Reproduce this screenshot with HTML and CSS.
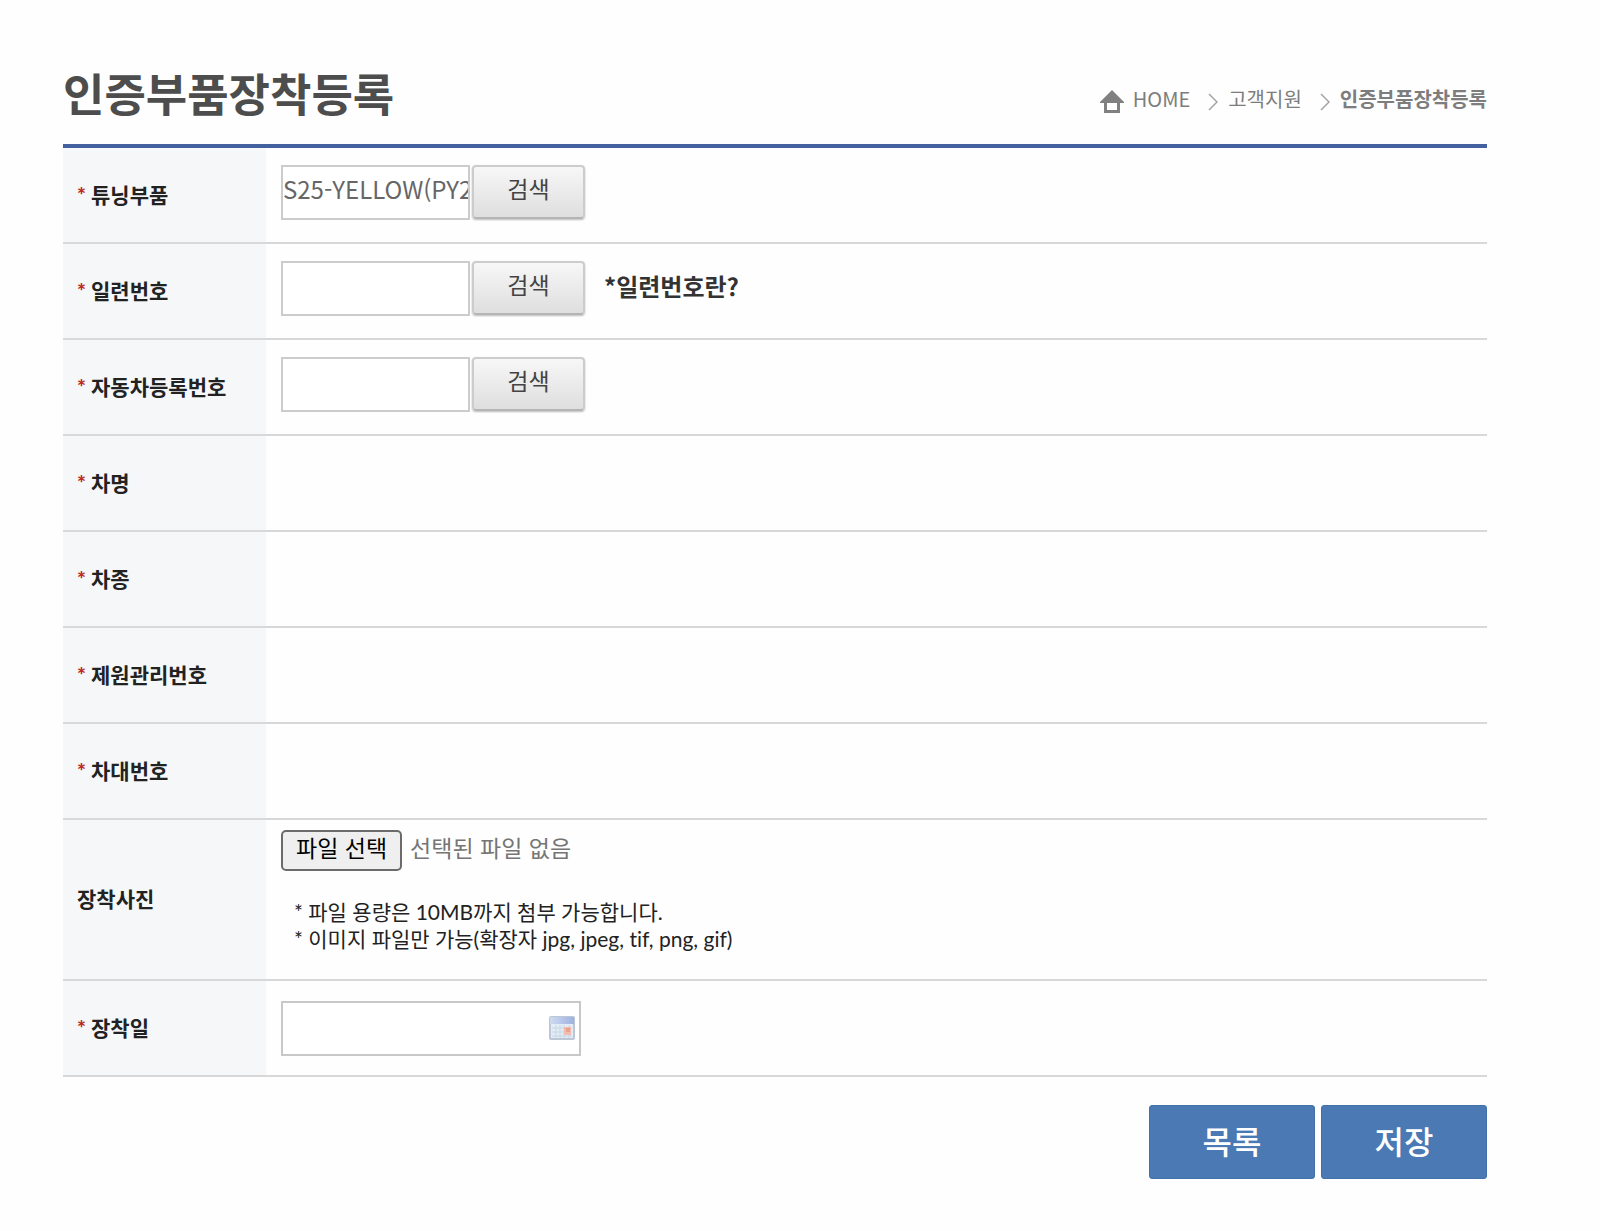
FILE: index.html
```html
<!DOCTYPE html>
<html lang="ko">
<head>
<meta charset="utf-8">
<meta name="viewport" content="width=device-width, initial-scale=1">
<title>인증부품장착등록</title>
<link rel="stylesheet" href="styles.css">
</head>
<body>
<main class="page">
  <header class="page-header">
    <h1 class="title">인증부품장착등록</h1>
    <nav class="breadcrumb" aria-label="현재 위치">
      <a class="home" href="#">
        <svg class="home-icon" width="24" height="24" viewBox="0 0 24 24" aria-hidden="true"><path fill="#808080" fill-rule="evenodd" d="M12 0 24 12V13H20V23H4V13H0V12ZM7 13V20H17V13Z"/></svg>
        HOME</a>
      <svg class="chevron" width="10" height="18" viewBox="0 0 10 18" aria-hidden="true"><path fill="none" stroke="#a3a3a3" stroke-width="1.5" d="M1 1 9 9 1 17"/></svg>
      <a href="#">고객지원</a>
      <svg class="chevron" width="10" height="18" viewBox="0 0 10 18" aria-hidden="true"><path fill="none" stroke="#a3a3a3" stroke-width="1.5" d="M1 1 9 9 1 17"/></svg>
      <strong>인증부품장착등록</strong>
    </nav>
  </header>
  <form>
    <table class="form-table">
      <tbody>
        <tr>
          <th scope="row"><span class="required">*</span> <label for="part">튜닝부품</label></th>
          <td><div class="field"><input class="text-input" id="part" type="text" value="S25-YELLOW(PY2"><button class="search" type="button">검색</button></div></td>
        </tr>
        <tr>
          <th scope="row"><span class="required">*</span> <label for="serial">일련번호</label></th>
          <td><div class="field"><input class="text-input" id="serial" type="text"><button class="search" type="button">검색</button><a class="help" href="#">*일련번호란?</a></div></td>
        </tr>
        <tr>
          <th scope="row"><span class="required">*</span> <label for="plate">자동차등록번호</label></th>
          <td><div class="field"><input class="text-input" id="plate" type="text"><button class="search" type="button">검색</button></div></td>
        </tr>
        <tr><th scope="row"><span class="required">*</span> 차명</th><td></td></tr>
        <tr><th scope="row"><span class="required">*</span> 차종</th><td></td></tr>
        <tr><th scope="row"><span class="required">*</span> 제원관리번호</th><td></td></tr>
        <tr><th scope="row"><span class="required">*</span> 차대번호</th><td></td></tr>
        <tr>
          <th scope="row">장착사진</th>
          <td class="photo">
            <div class="file">
              <input class="file-input" id="photo" type="file" accept="image/*">
              <label class="file-button" for="photo">파일 선택</label>
              <span class="file-name">선택된 파일 없음</span>
            </div>
            <p class="notes">* 파일 용량은 10MB까지 첨부 가능합니다.<br>* 이미지 파일만 가능(확장자 jpg, jpeg, tif, png, gif)</p>
          </td>
        </tr>
        <tr>
          <th scope="row"><span class="required">*</span> <label for="date">장착일</label></th>
          <td class="date-cell">
            <div class="date-box">
              <input class="date-input" id="date" type="text">
              <button class="calendar" type="button" aria-label="날짜 선택">
                <svg width="26" height="24" viewBox="0 0 26 24" aria-hidden="true">
                  <defs><linearGradient id="bar" x2="1"><stop stop-color="#cfdaf0"/><stop offset="1" stop-color="#9db3e0"/></linearGradient></defs>
                  <rect x="1" y="1" width="24" height="22" rx="1" fill="#e4edf5" stroke="#bcc6d6" stroke-width="2"/>
                  <rect x="1" y="1" width="24" height="7" fill="url(#bar)"/>
                  <path d="M3 12H23M3 16H23M3 20H23M7 9V22M11 9V22M15 9V22M20 9V22" stroke="#c6d7e6"/>
                  <rect x="15" y="11" width="7" height="8" fill="#f2bcae"/>
                  <rect x="17" y="12" width="4" height="4" fill="#eda08e"/>
                </svg>
              </button>
            </div>
          </td>
        </tr>
      </tbody>
    </table>
    <div class="actions">
      <button class="action" type="button">목록</button>
      <button class="action" type="submit">저장</button>
    </div>
  </form>
</main>
</body>
</html>
```
FILE: styles.css
```css
* { box-sizing: border-box; }

body {
  margin: 0;
  background: #fefefe;
  color: #222;
  font-family: "Noto Sans CJK KR", sans-serif;
  font-size: 21px;
  line-height: 27px;
}

button, input { font: inherit; }
a { color: inherit; text-decoration: none; }

.page { padding: 60px 113px 48px 63px; }

.page-header {
  display: flex;
  justify-content: space-between;
  align-items: center;
  height: 84px;
  padding-bottom: 18px;
}

.title {
  margin: 0;
  color: #4d4d4d;
  font-size: 45px;
  line-height: 66px;
  font-weight: 700;
}

.breadcrumb {
  display: flex;
  align-items: center;
  padding-top: 10px;
  color: #7d7d7d;
  font-size: 20px;
}
.home { display: flex; align-items: center; gap: 9px; }
.home-icon { margin-top: 8px; }
.chevron { margin: 8px 10px 0 18px; }

.form-table {
  width: 100%;
  border-collapse: separate;
  border-spacing: 0;
  border-top: 4px solid #43609f;
}
.form-table th, .form-table td {
  height: 96px;
  padding: 0 0 0 15px;
  border-bottom: 2px solid #d8d8d8;
  text-align: left;
}
.form-table th {
  width: 203px;
  padding: 0 0 2px 14px;
  background: #f5f7f9;
  font-family: Lato, "Noto Sans CJK KR", sans-serif;
  font-weight: 700;
}
.form-table .required { color: #b92b24; font-weight: 900; }

.field { display: flex; gap: 2px; padding-bottom: 6px; }
.text-input {
  width: 189px;
  height: 55px;
  padding: 0 0 7px;
  border: 2px solid #ccc;
  background: #fff;
  color: #666;
  font-size: 24px;
}
.search {
  width: 113px;
  height: 54px;
  padding: 0 0 7px;
  border: 2px solid #ccc;
  border-bottom-color: #b5b5b5;
  border-radius: 4px;
  background: linear-gradient(#f7f7f7, #dedede);
  box-shadow: 0 1px 2px #bbb;
  color: #444;
  font-size: 23px;
}
.help {
  align-self: center;
  margin-left: 17px;
  padding-bottom: 6px;
  color: #333;
  font-size: 24px;
  font-weight: 700;
}

.form-table .photo { height: 161px; padding-top: 10px; vertical-align: top; }
.file { display: flex; align-items: center; gap: 8px; font-size: 23px; }
.file-input { position: absolute; width: 1px; height: 1px; opacity: 0; }
.file-button {
  height: 41px;
  padding: 2px 13px;
  border: 2px solid #6b6b6b;
  border-radius: 5px;
  background: #efefef;
  color: #000;
}
.file-name { padding-bottom: 6px; color: #757575; }
.notes {
  margin: 27px 0 0 13px;
  font-family: Lato, "Noto Sans CJK KR", sans-serif;
  font-variant-ligatures: none;
}

.date-box {
  display: flex;
  align-items: center;
  width: 300px;
  height: 55px;
  padding-right: 4px;
  border: 2px solid #c8c8c8;
  background: #fff;
}
.date-input { flex: 1; min-width: 0; height: 100%; padding: 0 4px; border: 0; background: none; }
.calendar { display: flex; padding: 0; border: 0; background: none; }

.actions { display: flex; justify-content: flex-end; gap: 6px; margin-top: 28px; }
.action {
  width: 166px;
  height: 74px;
  padding: 0 0 3px;
  border: 1px solid #4271aa;
  border-radius: 3px;
  background: #4a79b4;
  color: #fff;
  font-size: 32px;
  font-weight: 500;
}
```
